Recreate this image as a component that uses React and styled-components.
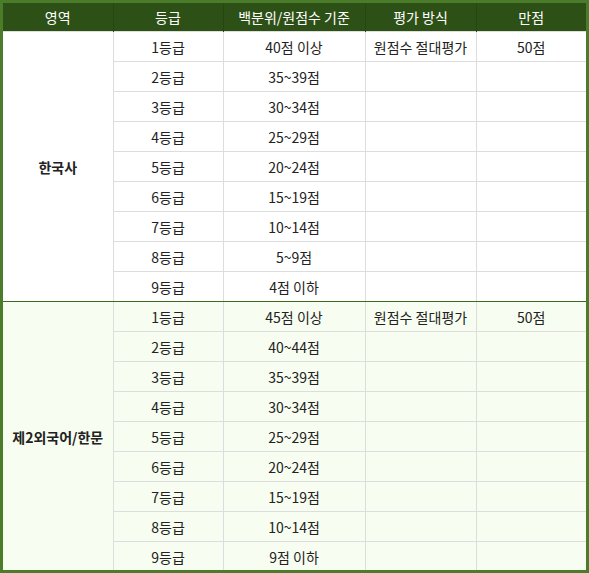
import React from 'react'
import styled, { createGlobalStyle } from 'styled-components'

const GlobalStyle = createGlobalStyle`
  body {
    margin: 0;
    font-family: "Noto Sans CJK KR", "Noto Sans", sans-serif;
    background: #ffffff;
  }
`

const Frame = styled.div`
  width: 583px;
  height: 567px;
  overflow: hidden;
  border: 3px solid #4a7c2a;
`

const Table = styled.table`
  width: 100%;
  border-collapse: collapse;
  table-layout: fixed;
  font-size: 14px;
  color: #222;
`

const HeadCell = styled.th`
  height: 28px;
  padding: 0;
  background: #2d5016;
  color: #ffffff;
  font-weight: 400;
  text-align: center;
  border-right: 1px solid #264612;
  &:last-child {
    border-right: none;
  }
`

const Section = styled.tbody`
  background: ${(p) => (p.$tint ? '#f7fdf0' : '#ffffff')};
`

const Cell = styled.td`
  height: 29px;
  padding: 0;
  text-align: center;
  border: 1px solid #dddddd;
  border-bottom-color: ${(p) => (p.$divider ? '#3d6b20' : '#dddddd')};
  &:last-child {
    border-right: none;
  }
`

const AreaCell = styled(Cell)`
  font-weight: 700;
  border-left: none;
`

const columns = [110, 110, 142, 111, 110]
const headers = ['영역', '등급', '백분위/원점수 기준', '평가 방식', '만점']

const sections = [
  {
    area: '한국사',
    full: '50점',
    ranges: ['40점 이상', '35~39점', '30~34점', '25~29점', '20~24점', '15~19점', '10~14점', '5~9점', '4점 이하'],
  },
  {
    area: '제2외국어/한문',
    full: '50점',
    tint: true,
    ranges: ['45점 이상', '40~44점', '35~39점', '30~34점', '25~29점', '20~24점', '15~19점', '10~14점', '9점 이하'],
  },
]

export default function App() {
  return (
    <>
      <GlobalStyle />
      <Frame>
        <Table>
          <colgroup>
            {columns.map((w, i) => (
              <col key={i} style={{ width: w }} />
            ))}
          </colgroup>
          <thead>
            <tr>
              {headers.map((h) => (
                <HeadCell key={h}>{h}</HeadCell>
              ))}
            </tr>
          </thead>
          {sections.map((s, si) => {
            const divider = si === 0
            return (
              <Section key={s.area} $tint={s.tint}>
                {s.ranges.map((r, i) => {
                  const last = divider && i === s.ranges.length - 1
                  return (
                    <tr key={r}>
                      {i === 0 && (
                        <AreaCell rowSpan={s.ranges.length} $divider={divider}>
                          {s.area}
                        </AreaCell>
                      )}
                      <Cell $divider={last}>{i + 1}등급</Cell>
                      <Cell $divider={last}>{r}</Cell>
                      <Cell $divider={last}>{i === 0 ? '원점수 절대평가' : ''}</Cell>
                      <Cell $divider={last}>{i === 0 ? s.full : ''}</Cell>
                    </tr>
                  )
                })}
              </Section>
            )
          })}
        </Table>
      </Frame>
    </>
  )
}
